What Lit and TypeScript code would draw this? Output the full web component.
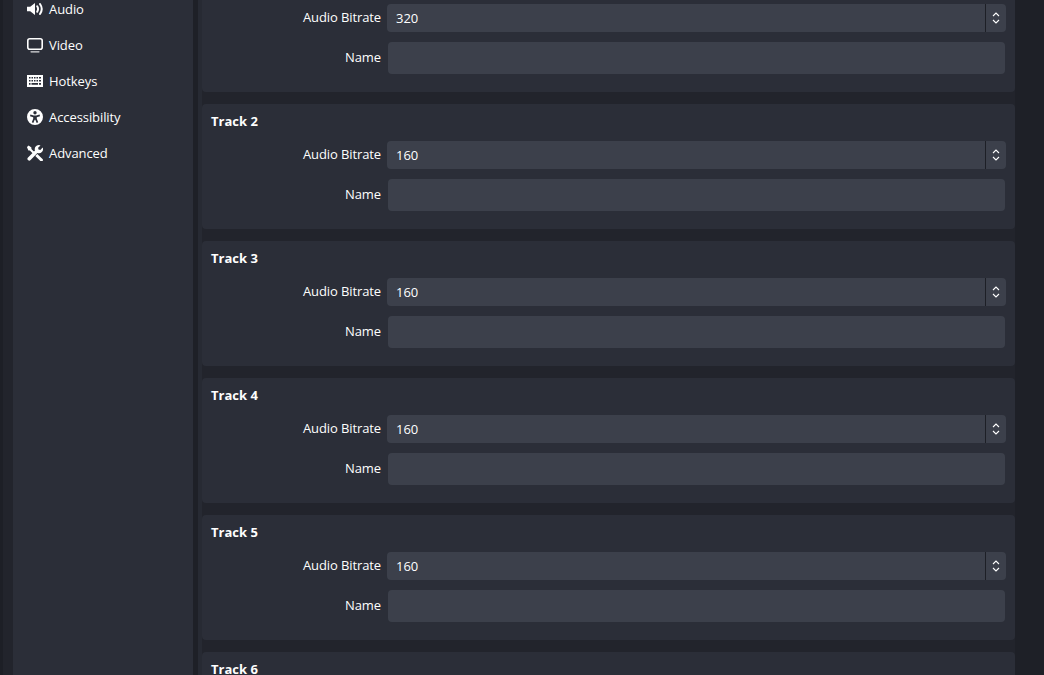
import { css, html, LitElement, svg } from "lit";
import { customElement } from "lit/decorators.js";

const NAV = [
  {
    label: "Audio",
    icon: svg`<path d="M0 5.800h3.200L8 2v12L3.200 10.200H0z" fill="currentColor"/><path d="M10.200 5.300c1 1.600 1 3.800 0 5.400M13 3c2.100 3 2.100 7 0 10" fill="none" stroke="currentColor" stroke-width="2" stroke-linecap="round"/>`,
  },
  {
    label: "Video",
    icon: svg`<rect x=".8" y="1.800" width="14.400" height="10.400" rx="2" fill="none" stroke="currentColor" stroke-width="1.600"/><path d="M4 14.800h8" stroke="currentColor" stroke-width="1.200" stroke-linecap="round" opacity=".85"/>`,
  },
  {
    label: "Hotkeys",
    icon: svg`<path fill-rule="evenodd" fill="currentColor" d="M0 2h16v12H0zM2 4v1.500h1.500V4zm2.500 0v1.500H6V4zM7 4v1.500h1.500V4zm2.500 0v1.500H11V4zM12 4v1.500h2V4zM2 7v1.500h1.500V7zm2.500 0v1.500H6V7zM7 7v1.500h1.500V7zm2.500 0v1.500H11V7zM12 7v1.500h2V7zM2 10v1.800h1.500V10zm2.500 0v1.800H11V10zm7.500 0v1.800h2V10z"/>`,
  },
  {
    label: "Accessibility",
    icon: svg`<path fill-rule="evenodd" fill="currentColor" d="M8 0a8 8 0 1 1 0 16A8 8 0 0 1 8 0zm0 2a1.700 1.700 0 1 0 0 3.400A1.700 1.700 0 0 0 8 2zM3.400 5.600 3 7.200l3.200 1v1.500L4.800 13.300l1.500.6L7.700 10.700h.6l1.400 3.200 1.500-.6-1.400-3.600V8.200l3.200-1-.4-1.600L9.200 6.400H6.800z"/>`,
  },
  {
    label: "Advanced",
    icon: svg`<path fill="currentColor" d="M1.600.4 4.400 2.600v1.500l3.800 3.800-1.500 1.500-3.800-3.800H1.400L-.1 2.100zM11.800.1a4 4 0 0 1 1.700.3l-2.400 2.400.4 1.800 1.800.4L15.700 2.600A4.100 4.100 0 0 1 10.400 8L3.600 15a1.800 1.800 0 0 1-2.600-2.600L8 5.600A4.100 4.100 0 0 1 11.800.1zM10.300 9l5.200 5.100a1.400 1.400 0 0 1-2 2L8.300 10.900z"/>`,
  },
];

const TRACKS = [
  { title: "", bitrate: "320" },
  { title: "Track 2", bitrate: "160" },
  { title: "Track 3", bitrate: "160" },
  { title: "Track 4", bitrate: "160" },
  { title: "Track 5", bitrate: "160" },
  { title: "Track 6", bitrate: "" },
];

@customElement("app-root")
export class AppRoot extends LitElement {
  static override styles = css`
    :host {
      display: block;
      height: 675px;
      overflow: hidden;
      background: #1e2027;
      color: #fefefe;
      font-family: "Open Sans", sans-serif;
      font-size: 13px;
    }
    .window {
      display: flex;
      height: 675px;
    }
    .gutter {
      flex: 0 0 10px;
      border-left: 3px solid #1d1f26;
      background: #22242c;
    }
    .sidebar {
      flex: 0 0 180px;
      background: #2b2e38;
      overflow: hidden;
    }
    .nav {
      margin-top: -9px;
      padding-left: 14px;
      display: flex;
      flex-direction: column;
    }
    .nav-item {
      display: flex;
      align-items: center;
      gap: 6px;
      height: 36px;
      letter-spacing: -0.08px;
    }
    .nav-item svg {
      width: 16px;
      height: 16px;
      flex: none;
    }
    .panel {
      flex: 0 0 813px;
      margin-left: 5px;
      border-left: 4px solid #272a33;
      overflow: hidden;
    }
    .tracks {
      margin-top: -33px;
      display: flex;
      flex-direction: column;
      gap: 12px;
      background: #22242c;
    }
    .card {
      background: #2b2e38;
      border-radius: 4px;
      height: 125px;
      flex: none;
      box-sizing: border-box;
      padding: 9px 9px 0 9px;
    }
    .title {
      font-weight: 700;
      height: 28px;
      line-height: 16px;
    }
    .row {
      display: grid;
      grid-template-columns: 170px 1fr;
      column-gap: 6px;
      align-items: center;
    }
    .row + .row {
      margin-top: 10px;
    }
    .label {
      text-align: right;
      padding-bottom: 2px;
      letter-spacing: -0.1px;
    }
    .select {
      display: flex;
      height: 28px;
      background: #3c404b;
      border-radius: 4px;
      overflow: hidden;
    }
    .value {
      flex: 1;
      padding-left: 9px;
      line-height: 29px;
    }
    .arrows {
      flex: 0 0 20px;
      border-left: 1px solid #1d1f26;
      display: flex;
      align-items: center;
      justify-content: center;
    }
    .arrows svg {
      width: 10px;
      height: 14px;
    }
    .name {
      height: 32px;
      margin: 0 1px;
      background: #3c404b;
      border-radius: 4px;
    }
  `;

  override render() {
    return html`
      <div class="window">
        <div class="gutter"></div>
        <div class="sidebar">
          <div class="nav">
            ${NAV.map(
              (n) => html`
                <div class="nav-item">
                  <svg viewBox="0 0 16 16">${n.icon}</svg>
                  <span>${n.label}</span>
                </div>
              `,
            )}
          </div>
        </div>
        <div class="panel">
          <div class="tracks">
            ${TRACKS.map(
              (t) => html`
                <div class="card">
                  <div class="title">${t.title}</div>
                  ${t.bitrate
                    ? html`
                        <div class="row">
                          <div class="label">Audio Bitrate</div>
                          <div class="select">
                            <div class="value">${t.bitrate}</div>
                            <div class="arrows">
                              <svg viewBox="0 0 10 14">
                                <path d="M2 5l3-3 3 3M2 9l3 3 3-3" fill="none" stroke="#fefefe" stroke-width="1.100"/>
                              </svg>
                            </div>
                          </div>
                        </div>
                        <div class="row">
                          <div class="label">Name</div>
                          <div class="name"></div>
                        </div>
                      `
                    : ""}
                </div>
              `,
            )}
          </div>
        </div>
      </div>
    `;
  }
}
